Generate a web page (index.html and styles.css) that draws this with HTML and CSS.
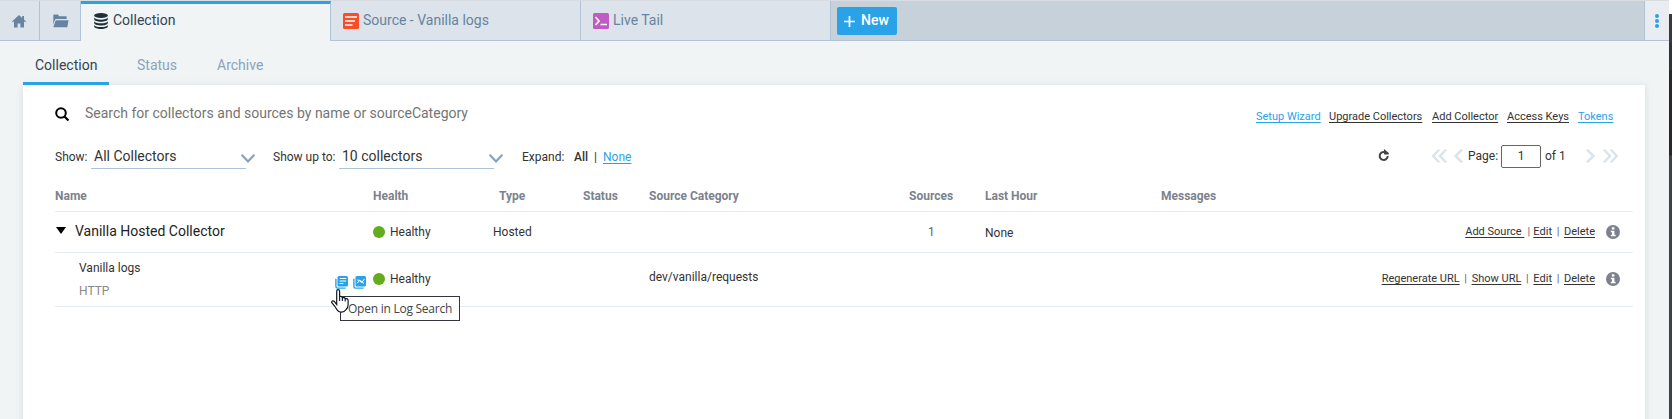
FILE: index.html
```html
<!DOCTYPE html>
<html lang="en">
<head>
<meta charset="utf-8">
<title>Collection</title>
<link rel="stylesheet" href="styles.css">
</head>
<body>
<div class="window">
<div class="app">
  <nav class="tabbar">
    <a class="tab tab-icon"><svg width="14" height="13" viewBox="0 0 14 13"><path fill="#6783a0" d="M7 0 0 6.400l.8.9L2 6.300V12.500h3.600V8.500h2.800v4H12V6.300l1.200 1 .8-.9-2-1.800V1h-1.800v1.900z"/></svg></a>
    <a class="tab tab-icon tab-folder"><svg width="16" height="14" viewBox="0 0 16 14"><path fill="#6783a0" d="M.3 10.500V1.300Q.3.500 1.100.500H5l1.200 1.700h6.700q.8 0 .8.800v2H3.300q-1 0-1.400 1zM3.500 6.300h12L14.300 13.200H1q-.6 0-.5-.6L2.500 7q.300-.700 1-.700z"/></svg></a>
    <a class="tab tab-active"><svg width="14" height="16" viewBox="0 0 14 16"><g fill="#202d3b"><ellipse cx="7" cy="2.500" rx="6.800" ry="2.500"/><path d="M.2 4q0 1.300 2 2 4.800 1.300 9.600 0 2-.7 2-2v2.200c0 3.300-13.600 3.300-13.600 0zM.2 7.700q0 1.300 2 2 4.800 1.300 9.600 0 2-.7 2-2v2.200c0 3.300-13.600 3.300-13.600 0zM.2 11.400q0 1.300 2 2 4.800 1.300 9.600 0 2-.7 2-2v2.200c0 3.300-13.600 3.300-13.600 0z"/></g></svg><span>Collection</span></a>
    <a class="tab tab-doc"><svg width="16" height="16" viewBox="0 0 16 16"><rect width="16" height="16" rx="1.500" fill="#fc4c27"/><path d="M2 4h12M2 8h10M2 12h7.500" stroke="#fff" stroke-width="1.600"/></svg><span>Source - Vanilla logs</span></a>
    <a class="tab tab-doc tab-live"><svg width="16" height="16" viewBox="0 0 16 16"><rect width="16" height="16" rx="1.500" fill="#c05bc5"/><path d="m2.500 4 3.500 4-3.500 4M7.500 11.500h6.500" fill="none" stroke="#fff" stroke-width="1.700"/></svg><span>Live Tail</span></a>
    <div class="bar-fill"><button class="new"><svg width="11" height="11" viewBox="0 0 11 11"><path d="M5.500 0v11M0 5.500h11" stroke="#fff" stroke-width="1.700"/></svg><span>New</span></button></div>
    <div class="more"><svg width="4" height="14" viewBox="0 0 4 14"><g fill="#2aa2e8"><circle cx="2" cy="2" r="2"/><circle cx="2" cy="7" r="2"/><circle cx="2" cy="12" r="2"/></g></svg></div>
  </nav>
  <nav class="subnav"><a class="sub sub-on">Collection</a><a class="sub">Status</a><a class="sub">Archive</a></nav>
  <main class="card">
    <div class="search">
      <svg width="14" height="14" viewBox="0 0 14 14"><circle cx="6" cy="6" r="4.800" fill="none" stroke="#000" stroke-width="2"/><path d="m9.500 9.500 4 4" stroke="#000" stroke-width="2.200"/></svg>
      <span class="placeholder">Search for collectors and sources by name or sourceCategory</span>
      <div class="toplinks"><a class="blue w1">Setup Wizard</a><a class="w2">Upgrade Collectors</a><a class="w3">Add Collector</a><a class="w4">Access Keys</a><a class="blue">Tokens</a></div>
    </div>
    <div class="controls">
      <span class="lbl lbl-show">Show:</span>
      <span class="select"><span>All Collectors</span><svg width="14" height="9" viewBox="0 0 14 9"><path d="m.7.700 6.300 6.800L13.300.700" fill="none" stroke="#839fbc" stroke-width="2"/></svg></span>
      <span class="lbl lbl-upto">Show up to:</span>
      <span class="select"><span>10 collectors</span><svg width="14" height="9" viewBox="0 0 14 9"><path d="m.7.700 6.300 6.800L13.300.700" fill="none" stroke="#839fbc" stroke-width="2"/></svg></span>
      <span class="lbl lbl-expand">Expand:</span><b class="lbl all">All</b><span class="lbl bar">|</span><a class="lbl none">None</a>
      <div class="pager">
        <svg class="refresh" width="12" height="13" viewBox="0 0 12 13"><path d="M9.700 7A4 4 0 1 1 7.200 3.200" fill="none" stroke="#444" stroke-width="2"/><path d="M6 0v3.500L6.200 5.500H10.800V4z" fill="#444"/></svg>
        <svg class="first" width="15" height="14" viewBox="0 0 15 14"><path d="M7.200.700 1.200 7l6 6.300M14 .700 8 7l6 6.300" fill="none" stroke="#dce4eb" stroke-width="2.500"/></svg>
        <svg class="prev" width="9" height="14" viewBox="0 0 9 14"><path d="M8 .700 1.500 7 8 13.300" fill="none" stroke="#dce4eb" stroke-width="2.600"/></svg>
        <span class="pg">Page:</span><span class="pageno">1</span><span class="of">of 1</span>
        <svg class="next" width="9" height="14" viewBox="0 0 9 14"><path d="M1 .700 7.500 7 1 13.300" fill="none" stroke="#dce4eb" stroke-width="2.600"/></svg>
        <svg width="15" height="14" viewBox="0 0 15 14"><path d="M1 .700 7 7l-6 6.300M7.800.700l6 6.300-6 6.300" fill="none" stroke="#dce4eb" stroke-width="2.500"/></svg>
      </div>
    </div>
    <section class="table">
      <div class="row head"><span>Name</span><span>Health</span><span class="type-h">Type</span><span>Status</span><span>Source Category</span><span>Sources</span><span>Last Hour</span><span>Messages</span></div>
      <div class="row parent">
        <div class="collector"><svg width="10" height="7" viewBox="0 0 10 7"><path d="M0 0h10L5 7z"/></svg><span>Vanilla Hosted Collector</span></div>
        <div class="health"><i class="dot"></i>Healthy</div>
        <span class="type">Hosted</span><span></span><span></span><span class="count">1</span><span class="hour">None</span>
        <div class="actions"><a class="addsource">Add Source&nbsp;</a><i class="sep sep-add">|</i><a>Edit</a><i class="sep">|</i><a>Delete</a><svg class="info" width="14" height="14" viewBox="0 0 14 14"><circle cx="7" cy="7" r="7" fill="#7c828d"/><path d="M5.800 2.300h2.600v2.200H5.800zM4.800 5.700h3.600v4h1.200v1.500H4.800V9.700H6V7.200H4.800z" fill="#fff"/></svg></div>
      </div>
      <div class="row child">
        <div class="source">
          <div class="names"><span class="sname">Vanilla logs</span><span class="stype">HTTP</span></div>
          <div class="shortcuts">
            <svg width="13" height="13" viewBox="0 0 13 13"><rect x="2.500" width="10.500" height="10.500" rx="1.500" fill="#2aa2e8"/><path d="M.9 2.800v7.800q0 1.500 1.500 1.500h8.200" fill="none" stroke="#2aa2e8" stroke-width="1.400"/><path d="M4.800 2.500h6.500M4.600 5h6.500M4.500 7.500h3.800" stroke="#fff"/></svg>
            <svg width="13" height="13" viewBox="0 0 13 13"><rect x="2.500" width="10.500" height="10.500" rx="1.500" fill="#2aa2e8"/><path d="M.9 2.800v7.800q0 1.500 1.500 1.500h8.200" fill="none" stroke="#2aa2e8" stroke-width="1.400"/><path d="m4.200 7.300 2.300-2.800 2 2.300L11.500 3M4.300 4l3.200.5 3.500 3" fill="none" stroke="#fff" stroke-width="1"/></svg>
            <div class="tooltip">Open in Log Search</div>
            <svg class="cursor" width="18" height="24" viewBox="0 0 18 24"><path d="M5.700 15.500V2.300Q5.700.700 7.100.700t1.500 1.600v5.200q2.400-.5 2.800 1.200 2.400-.6 2.800 1 2.700-.4 2.900 1.500V16q0 2.700-2.200 4.800-1.500 2.400-4.300 2.400H9.700q-2.200-.2-3.600-2.300L3.600 17 1 14q-.8-1.500.4-2 1.200-.4 2.500 1.100z" fill="#fff" stroke="#111724" stroke-width="1.200"/><path d="M8.600 7v5M11.400 8.500V12M14.200 9.500v3" stroke="#111724" stroke-width="1.100"/></svg>
          </div>
        </div>
        <div class="health"><i class="dot"></i>Healthy</div>
        <span></span><span></span><span class="cat">dev/vanilla/requests</span><span></span><span></span>
        <div class="actions"><a class="regen">Regenerate URL</a><i class="sep">|</i><a class="showurl">Show URL</a><i class="sep">|</i><a>Edit</a><i class="sep">|</i><a>Delete</a><svg class="info" width="14" height="14" viewBox="0 0 14 14"><circle cx="7" cy="7" r="7" fill="#7c828d"/><path d="M5.800 2.300h2.600v2.200H5.800zM4.800 5.700h3.600v4h1.200v1.500H4.800V9.700H6V7.200H4.800z" fill="#fff"/></svg></div>
      </div>
    </section>
  </main>
</div>
<div class="edge"></div>
</div>
</body>
</html>
```
FILE: styles.css
```css
* { box-sizing: border-box; }
body { margin: 0; font-family: Roboto, "Liberation Sans", sans-serif; font-size: 12px; color: #333; overflow: hidden; }
svg { display: block; flex: none; }
span, a, b, i { white-space: nowrap; }
.window { display: flex; width: 1672px; height: 419px; }
.app { width: 1669px; background: #f0f4f5; overflow: hidden; }
.edge { width: 3px; background: linear-gradient(#fff 14px, #37393b 14px 42px, #303336 43px 70px, #252729 71px 155px, #3d4144 156px); }

/* Window tabs */
.tabbar { display: flex; height: 41px; border-top: 1px solid #d9dce0; }
.tab { display: flex; width: 250px; height: 40px; background: #dce3ea; border-right: 1px solid #b2c3d5; border-bottom: 1px solid #b2c3d5; color: #6783a0; font-size: 14px; line-height: 20px; padding: 12px 0 0 12px; }
.tab span { margin-top: -3px; }
.tab-icon { width: 40px; padding-top: 14px; }
.tab-folder { width: 41px; padding-left: 13px; padding-top: 13px; }
.tab-active { background: #f0f4f5; border-top: 3px solid #2aa2e8; border-bottom: 0; color: #354352; padding: 9px 0 0 13px; gap: 5px; }
.tab-doc { gap: 4px; }
.bar-fill { flex: 1; height: 40px; background: #c6d1d9; border-bottom: 1px solid #b2c3d5; padding: 6px; }
.new { display: flex; align-items: center; gap: 6px; width: 60px; height: 28px; border: 0; border-radius: 2px; background: #2aa2e8; color: #fff; font: 500 14px/28px Roboto, sans-serif; padding: 0 0 0 7px; }
.new span { margin-top: -2px; }
.more { display: flex; justify-content: center; width: 25px; height: 40px; padding-top: 13px; background: #e9edf1; border-left: 1px solid #b2c3d5; border-bottom: 1px solid #b2c3d5; }

.subnav { display: flex; height: 44px; padding-left: 23px; font-size: 14px; color: #8ca3ba; }
.sub { width: 80px; height: 44px; padding: 14px 12px 0; line-height: 20px; }
.sub-on { width: 86px; margin-right: 16px; border-bottom: 3px solid #2aa2e8; color: #354352; }

.card { width: 1622px; height: 360px; margin-left: 23px; padding-left: 32px; background: #fff; border-radius: 2px; box-shadow: 0 1px 6px #b9c5ce80; }
.search { display: flex; height: 50px; padding-top: 22px; }
.placeholder { margin: -4px 0 0 16px; font-size: 14px; line-height: 20px; color: #757575; }
.toplinks { display: flex; margin: 1px 0 0 auto; width: 389px; font-size: 11px; line-height: 18px; }
.toplinks a { text-decoration: underline; text-underline-offset: 2px; }
.toplinks .blue, .none { color: #2aa2e8; }
.w1 { width: 73px; } .w2 { width: 103px; } .w3 { width: 75px; } .w4 { width: 71px; }

.controls { display: flex; height: 50px; line-height: 20px; padding-top: 11px; }
.lbl { padding-top: 1px; }
.lbl-show { width: 36px; }
.select { display: flex; justify-content: space-between; width: 155px; height: 23px; border-bottom: 1px solid #adc3d7; padding-left: 3px; font-size: 14px; }
.select svg { margin: 8px -9px 0 0; }
.lbl-upto { width: 66px; margin-left: 27px; }
.lbl-expand { width: 52px; margin-left: 28px; }
.all { width: 20px; font-weight: 500; }
.bar { width: 9px; }
.none { text-decoration: underline; text-underline-offset: 2px; }
.pager { display: flex; margin-left: auto; width: 267px; }
.pager svg { margin-top: 3px; }
.first { margin-left: 42px; }
.prev { margin-left: 7px; }
.pg { width: 33px; margin-left: 5px; }
.pageno { width: 40px; height: 23px; margin-top: -1px; border: 1px solid #666; border-radius: 2px; text-align: center; line-height: 21px; }
.of { width: 41px; margin-left: 4px; }
.next { margin-right: 8px; }

.table { width: 1578px; }
.row { display: grid; grid-template-columns: 318px 121px 89px 65px 261px 76px 176px 472px; border-bottom: 1px solid #e7ecf0; line-height: 20px; }
.head { height: 27px; color: #7c828d; font-weight: 700; }
.head span { padding-top: 1px; }
.type-h { padding-left: 5px; }
.type { margin-left: -1px; }
.head span:nth-child(5), .cat { padding-left: 1px; }
.parent { height: 41px; padding-top: 10px; }
.collector { display: flex; padding-left: 1px; font-size: 14px; color: #222; }
.collector svg { margin: 5px 9px 0 0; }
.collector span { margin-top: -1px; }
.health { display: flex; gap: 5px; }
.dot { width: 12px; height: 12px; border-radius: 50%; background: #63ac1b; margin-top: 4px; }
.count { padding-left: 19px; color: #666; }
.hour { padding-top: 1px; }
.actions { display: flex; justify-content: flex-end; padding-right: 13px; font-size: 11px; }
.actions a { text-decoration: underline; text-underline-offset: 2px; }
.sep { width: 12px; font-style: normal; text-align: center; color: #666; }
.sep-add { width: 9px; }
.info { margin: 3px 0 0 11px; }
.child { height: 54px; padding-top: 16px; }
.source { display: flex; padding-left: 24px; }
.names { display: grid; width: 256px; margin-top: -11px; align-content: start; grid-template-rows: 23px 20px; }
.stype { color: #888; }
.shortcuts { position: relative; display: flex; gap: 5px; height: 13px; margin-top: 7px; }
.cat { margin-top: -2px; }
.tooltip { position: absolute; left: 5px; top: 20px; width: 120px; height: 25px; border: 1px solid #333640; background: #fff; font: 12px/23px "Open Sans", sans-serif; letter-spacing: -.25px; padding-left: 7px; white-space: nowrap; color: #444; }
.cursor { position: absolute; left: -4px; top: 13px; }
```
